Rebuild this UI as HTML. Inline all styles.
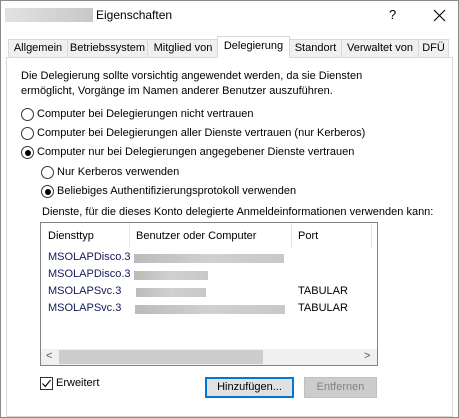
<!DOCTYPE html>
<html><head><meta charset="utf-8"><style>
*{box-sizing:border-box;margin:0;padding:0}
body{width:459px;height:418px;background:#fff;font-family:"Liberation Sans",sans-serif;font-size:11px;color:#000;position:relative;overflow:hidden}
.a{position:absolute;white-space:nowrap}
.win{position:absolute;left:0;top:0;width:459px;height:418px;border:1px solid #8a8a8a}
.tab{position:absolute;top:39px;height:18px;border:1px solid #d9d9d9;border-bottom:none;background:#f0f0f0;text-align:center;line-height:17px}
.sel{top:36px;height:22px;background:#fff;border-color:#d9d9d9;z-index:2;line-height:19px}
.panel{position:absolute;left:6px;top:57px;width:447px;height:360px;border:1px solid #d9d9d9;background:#fff}
.r{position:absolute;width:13px;height:13px;border:1px solid #333;border-radius:50%;background:#fff}
.r.on::after{content:"";position:absolute;left:2.5px;top:2.5px;width:6px;height:6px;border-radius:50%;background:#000}
.blur{position:absolute;height:9px;background:linear-gradient(90deg,#bbb,#d0d0d0,#c8c8c8)}
.row{position:absolute;left:48px;color:#14185a}
</style></head><body>
<div class="win"></div>
<div class="blur" style="left:5px;top:8px;width:88px;height:14px;background:linear-gradient(90deg,#e2e2e2,#c8c8c8)"></div>
<div class="a" style="left:96px;top:8px;font-size:12px">Eigenschaften</div>
<div class="a" style="left:389px;top:7px;font-size:13px">?</div>
<svg class="a" style="left:433px;top:9px" width="13" height="13"><path d="M1 1L12 12M12 1L1 12" stroke="#000" stroke-width="1.1"/></svg>

<div class="panel"></div>
<div class="tab" style="left:8px;width:60px">Allgemein</div>
<div class="tab" style="left:67px;width:81px">Betriebssystem</div>
<div class="tab" style="left:147px;width:72px">Mitglied von</div>
<div class="tab sel" style="left:217px;width:73px;border-bottom:1px solid #fff">Delegierung</div>
<div class="tab" style="left:289px;width:53px">Standort</div>
<div class="tab" style="left:341px;width:78px">Verwaltet von</div>
<div class="tab" style="left:418px;width:31px">DFÜ</div>

<div class="a" style="left:21px;top:70px">Die Delegierung sollte vorsichtig angewendet werden, da sie Diensten</div>
<div class="a" style="left:21px;top:85px">ermöglicht, Vorgänge im Namen anderer Benutzer auszuführen.</div>

<div class="r" style="left:21px;top:108px"></div><div class="a" style="left:37px;top:108px">Computer bei Delegierungen nicht vertrauen</div>
<div class="r" style="left:21px;top:127px"></div><div class="a" style="left:37px;top:127px">Computer bei Delegierungen aller Dienste vertrauen (nur Kerberos)</div>
<div class="r on" style="left:21px;top:146px"></div><div class="a" style="left:37px;top:146px">Computer nur bei Delegierungen angegebener Dienste vertrauen</div>
<div class="r" style="left:41px;top:166px"></div><div class="a" style="left:57px;top:166px">Nur Kerberos verwenden</div>
<div class="r on" style="left:41px;top:185px"></div><div class="a" style="left:57px;top:185px">Beliebiges Authentifizierungsprotokoll verwenden</div>

<div class="a" style="left:42px;top:206px">Dienste, für die dieses Konto delegierte Anmeldeinformationen verwenden kann:</div>
<div class="a" style="left:40px;top:222px;width:338px;height:144px;border:1px solid #828282;background:#fff"></div>
<div class="a" style="left:129px;top:223px;width:1px;height:25px;background:#e5e5e5"></div>
<div class="a" style="left:291px;top:223px;width:1px;height:25px;background:#e5e5e5"></div>
<div class="a" style="left:371px;top:223px;width:1px;height:25px;background:#e5e5e5"></div>
<div class="a" style="left:48px;top:230px">Diensttyp</div>
<div class="a" style="left:136px;top:230px">Benutzer oder Computer</div>
<div class="a" style="left:298px;top:230px">Port</div>
<div class="row a" style="top:251px">MSOLAPDisco.3</div><div class="blur" style="left:134px;top:254px;width:150px"></div>
<div class="row a" style="top:268px">MSOLAPDisco.3</div><div class="blur" style="left:134px;top:271px;width:74px"></div>
<div class="row a" style="top:285px">MSOLAPSvc.3</div><div class="blur" style="left:136px;top:288px;width:70px"></div><div class="a" style="left:298px;top:285px">TABULAR</div>
<div class="row a" style="top:302px">MSOLAPSvc.3</div><div class="blur" style="left:135px;top:305px;width:150px"></div><div class="a" style="left:298px;top:302px">TABULAR</div>
<div class="a" style="left:41px;top:349px;width:336px;height:16px;background:#f0f0f0"></div>
<div class="a" style="left:59px;top:350px;width:204px;height:14px;background:#cdcdcd"></div>
<div class="a" style="left:46px;top:350px;font-size:11px;color:#555">&lt;</div>
<div class="a" style="left:364px;top:350px;font-size:11px;color:#555">&gt;</div>

<div class="a" style="left:40px;top:377px;width:13px;height:13px;border:1px solid #333;background:#fff"></div>
<svg class="a" style="left:40px;top:377px" width="13" height="13"><path d="M2.5 6.5L5.3 9.5L10.5 3" stroke="#000" stroke-width="1.1" fill="none"/></svg>
<div class="a" style="left:56px;top:377px">Erweitert</div>
<div class="a" style="left:205px;top:377px;width:89px;height:21px;border:2px solid #0078d7;background:#e1e1e1;text-align:center;line-height:17px">Hinzufügen...</div>
<div class="a" style="left:304px;top:377px;width:73px;height:21px;border:1px solid #bfbfbf;background:#ccc;color:#838383;text-align:center;line-height:19px">Entfernen</div>
</body></html>
